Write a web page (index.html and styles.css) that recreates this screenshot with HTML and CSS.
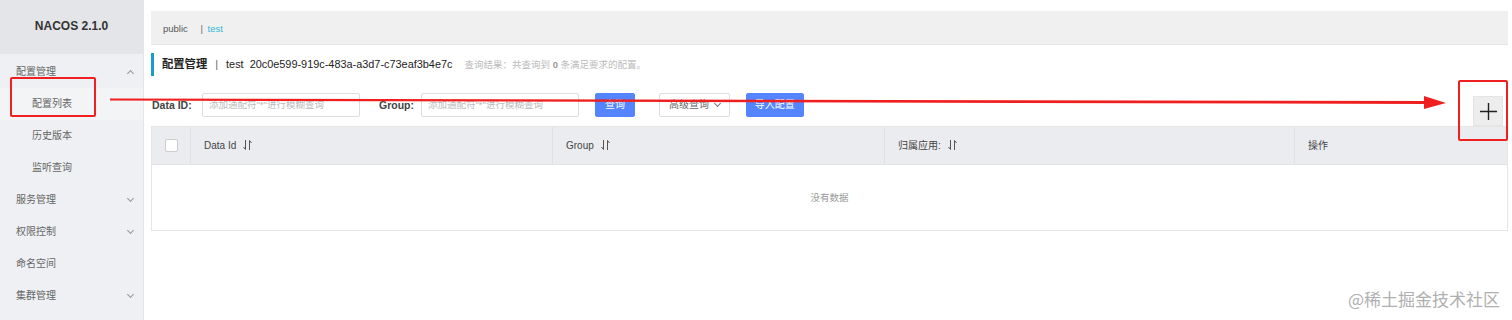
FILE: index.html
```html
<!DOCTYPE html>
<html>
<head>
    <title>Nacos</title>
    <link rel="stylesheet" href="styles.css">
</head>
<body>
    <div class="app">
        <div class="side">
            <div class="logo">NACOS 2.1.0</div>
            <div class="menu">
                <div class="item group">配置管理<span class="arrow up"></span></div>
                <div class="item sub active">配置列表</div>
                <div class="item sub">历史版本</div>
                <div class="item sub">监听查询</div>
                <div class="item group">服务管理<span class="arrow"></span></div>
                <div class="item group">权限控制<span class="arrow"></span></div>
                <div class="item group">命名空间</div>
                <div class="item group">集群管理<span class="arrow"></span></div>
            </div>
        </div>

        <div class="main">
            <div class="ns">
                <span class="ns-item">public</span>
                <span class="ns-sep">|</span>
                <span class="ns-item ns-on">test</span>
            </div>

            <div class="title">
                <span class="title-txt">配置管理</span>
                <span class="title-sep">|</span>
                <span class="title-txt">test</span>
                <span class="title-txt">20c0e599-919c-483a-a3d7-c73eaf3b4e7c</span>
                <span class="title-note">查询结果：共查询到 <b>0</b> 条满足要求的配置。</span>
            </div>

            <div class="search">
                <label>Data ID:</label>
                <div class="input">添加通配符"*"进行模糊查询</div>
                <label class="lbl2">Group:</label>
                <div class="input">添加通配符"*"进行模糊查询</div>
                <div class="btn primary b1">查询</div>
                <div class="btn normal">高级查询 <span class="caret"></span></div>
                <div class="btn primary">导入配置</div>
                <div class="plus">
                    <svg width="17" height="17" viewBox="0 0 17 17"><path d="M8.5 0V17M0 8.5H17" stroke="#222" stroke-width="1.4"/></svg>
                </div>
            </div>

            <div class="table">
                <div class="thead">
                    <div class="th c0"><span class="check"></span></div>
                    <div class="th c1">Data Id <svg class="sort" width="9" height="10" viewBox="0 0 9 10"><path d="M2.5 0V9.5L0.5 7M6.5 10V0.5L8.5 3" fill="none" stroke="#555" stroke-width="1"/></svg></div>
                    <div class="th c2">Group <svg class="sort" width="9" height="10" viewBox="0 0 9 10"><path d="M2.5 0V9.5L0.5 7M6.5 10V0.5L8.5 3" fill="none" stroke="#555" stroke-width="1"/></svg></div>
                    <div class="th c3">归属应用: <svg class="sort" width="9" height="10" viewBox="0 0 9 10"><path d="M2.5 0V9.5L0.5 7M6.5 10V0.5L8.5 3" fill="none" stroke="#555" stroke-width="1"/></svg></div>
                    <div class="th c4">操作</div>
                </div>
                <div class="empty">没有数据</div>
            </div>
        </div>
    </div>

    <!-- 标注 -->
    <div class="mark box1"></div>
    <div class="mark box2"></div>
    <svg class="arrow-line" width="1512" height="320">
        <polygon points="110,98.5 1428,101 1428,104 110,100.5" fill="#f01f1f"/>
        <polygon points="1424,96 1446,103 1424,109" fill="#f01f1f"/>
    </svg>
    <div class="wm">@稀土掘金技术社区</div>
</body>
</html>
```

FILE: styles.css
```css
body{
    margin: 0;
    font-family: "Liberation Sans", "Noto Sans CJK SC", sans-serif;
    font-size: 10px;
    color: #333;
    background: #fff;
}
.app{
    display: flex;
    height: 320px;
}
.side{
    width: 143px;
    flex-shrink: 0;
    background: #eef0f3;
    border-right: 1px solid #e3e5e8;
}
.logo{
    height: 54px;
    line-height: 52px;
    text-align: center;
    background: #e3e5e8;
    font-weight: bold;
    font-size: 12px;
    color: #333;
}
.menu{
    padding-top: 2px;
}
.item{
    height: 32px;
    line-height: 32px;
    position: relative;
    color: #666;
    font-size: 10px;
}
.group{
    padding-left: 16px;
}
.sub{
    padding-left: 32px;
}
.active{
    background: #f3f4f6;
}
.arrow{
    position: absolute;
    right: 10px;
    top: 12px;
    width: 4px;
    height: 4px;
    border-right: 1px solid #999;
    border-bottom: 1px solid #999;
    transform: rotate(45deg);
}
.arrow.up{
    top: 15px;
    transform: rotate(-135deg);
}
.main{
    flex: 1;
    padding: 11px 4px 0 7px;
}
.ns{
    height: 33px;
    line-height: 35px;
    background: #f0f0f0;
    border-bottom: 1px solid #e6e6e6;
    padding-left: 12px;
    font-size: 9.5px;
    color: #555;
}
.ns-sep{
    margin: 0 2px 0 10px;
    color: #666;
}
.ns-on{
    color: #33b5d6;
}
.title{
    margin-top: 8px;
    height: 23px;
    line-height: 23px;
    border-left: 3px solid #1a9ccc;
    padding-left: 8px;
    display: flex;
    gap: 6px;
}
.title-txt{
    font-size: 10.9px;
    color: #222;
}
.title-txt:first-child{
    font-weight: bold;
    font-size: 11.3px;
}
.title-sep{
    font-size: 11px;
    color: #666;
    margin: 0 2px;
}
.title-note{
    margin-left: 6px;
    font-size: 9.5px;
    color: #bbb;
}
.title-note b{
    color: #999;
}
.search{
    margin-top: 17px;
    height: 24px;
    display: flex;
    align-items: center;
    position: relative;
}
.search label{
    font-weight: bold;
    font-size: 10.5px;
    color: #444;
    width: 50px;
    padding-left: 1px;
}
.search .lbl2{
    width: 42px;
    margin-left: 18px;
}
.input{
    width: 150px;
    height: 22px;
    line-height: 22px;
    border: 1px solid #ddd;
    border-radius: 2px;
    padding-left: 6px;
    font-size: 9.5px;
    color: #bbb;
}
.btn{
    height: 22px;
    line-height: 22px;
    border-radius: 2px;
    font-size: 10px;
    padding: 0 8px;
    margin-left: 16px;
}
.b1{
    margin-left: 16px;
    padding: 0 9px;
}
.primary{
    background: #5584ff;
    color: #fff;
    border: 1px solid #5584ff;
}
.normal{
    margin-left: 24px;
    border: 1px solid #ddd;
    color: #666;
    background: #fff;
    padding: 0 9px;
}
.caret{
    display: inline-block;
    width: 4px;
    height: 4px;
    margin-left: 3px;
    border-right: 1px solid #777;
    border-bottom: 1px solid #777;
    transform: translateY(-2px) rotate(45deg);
}
.plus{
    position: absolute;
    right: 5px;
    top: 3px;
    width: 28px;
    height: 28px;
    background: #ededed;
    border: 1px solid #e4e4e4;
    display: flex;
    align-items: center;
    justify-content: center;
}
.table{
    margin-top: 9px;
    border: 1px solid #e6e6e6;
}
.thead{
    display: flex;
    height: 37px;
    background: #ebecef;
    border-bottom: 1px solid #e2e3e6;
}
.th{
    line-height: 37px;
    font-size: 10px;
    color: #444;
    padding-left: 13px;
    border-right: 1px solid #e0e1e4;
}
.c0{
    width: 39px;
    padding-left: 0;
    box-sizing: border-box;
    display: flex;
    align-items: center;
    justify-content: center;
}
.c1{ width: 348px; }
.c2{ width: 318px; }
.c3{ width: 396px; }
.c4{ flex: 1; border-right: none; }
.check{
    width: 11px;
    height: 11px;
    border: 1px solid #ccc;
    border-radius: 2px;
    background: #fff;
}
.sort{
    margin-left: 4px;
    vertical-align: -1px;
}
.empty{
    height: 65px;
    line-height: 65px;
    text-align: center;
    font-size: 9.5px;
    color: #999;
    background: #fff;
}
.mark{
    position: absolute;
    border: 2px solid #f02020;
    border-radius: 2px;
}
.box1{
    left: 10px;
    top: 77px;
    width: 82px;
    height: 36px;
}
.box2{
    left: 1458px;
    top: 80px;
    width: 46px;
    height: 57px;
}
.arrow-line{
    position: absolute;
    left: 0;
    top: 0;
    pointer-events: none;
}
.wm{
    position: absolute;
    right: 12px;
    top: 286px;
    font-size: 17px;
    color: #b0b0b0;
    font-family: "Noto Sans CJK SC", sans-serif;
}
```
